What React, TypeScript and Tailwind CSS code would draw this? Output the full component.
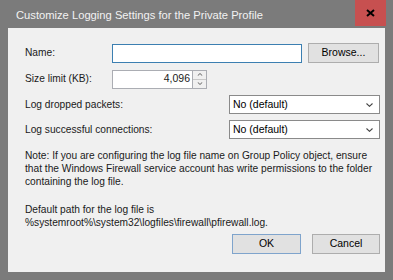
import React from "react";

const font = { fontFamily: '"Liberation Sans", Arial, sans-serif' };

const Chevron = ({ up = false, size = 7 }: { up?: boolean; size?: number }) => (
  <svg width={size} height={size - 3} viewBox="0 0 7 4" className={up ? "rotate-180" : ""}>
    <path d="M0.5 0.5 L3.5 3.3 L6.5 0.5" fill="none" stroke="#444" strokeWidth="1.1" />
  </svg>
);

const Select = ({ value }: { value: string }) => (
  <div className="flex h-[19px] w-[151px] items-center justify-between border border-[#8a8a8a] bg-white pl-[3px] pr-[6px]">
    <span className="text-[10.5px] text-black">{value}</span>
    <Chevron />
  </div>
);

const Button = ({ label, primary = false, width }: { label: string; primary?: boolean; width: string }) => (
  <button
    className={`${width} flex h-[20px] items-center justify-center border bg-[#e1e1e1] text-[10.5px] text-black ${
      primary ? "border-[#7fa4cc]" : "border-[#adadad]"
    }`}
  >
    {label}
  </button>
);

export default function App() {
  return (
    <div className="flex h-[280px] w-[393px] flex-col bg-[#7b7b7b]" style={font}>
      {/* title bar */}
      <div className="flex h-[28px] items-start justify-between">
        <span className="mt-[7px] pl-[16px] text-[11.2px] text-[#f2f2f2]">
          Customize Logging Settings for the Private Profile
        </span>
        <div className="mr-[7px] flex h-[26px] w-[31px] items-center justify-center bg-[#c75050]">
          <svg width="9" height="8" viewBox="0 0 9 8">
            <path d="M1 1 L8 7 M8 1 L1 7" stroke="#000" strokeWidth="2" />
          </svg>
        </div>
      </div>

      {/* client area */}
      <div className="mx-[8px] flex h-[244px] flex-col bg-[#f0f0f0] pl-[17px] text-[10.2px] text-[#1a1a1a]">
        <div className="mt-[15px] flex h-[20px] items-center">
          <span className="w-[87px]">Name:</span>
          <div className="h-[19px] w-[190px] border border-[#3c7fb1] bg-white" />
          <div className="ml-[6px]">
            <Button label="Browse..." width="w-[71px]" />
          </div>
        </div>

        <div className="mt-[7px] flex h-[18px] items-center">
          <span className="w-[87px]">Size limit (KB):</span>
          <div className="flex h-[19px] w-[81px] items-center justify-end border border-[#abadb3] bg-white pr-[2px] text-[10.5px]">
            4,096
          </div>
          <div className="flex h-[19px] w-[14px] flex-col border-y border-r border-[#abadb3] bg-[#f0f0f0]">
            <div className="flex flex-1 items-center justify-center border-b border-[#c8c8c8]">
              <Chevron up size={6} />
            </div>
            <div className="flex flex-1 items-center justify-center">
              <Chevron size={6} />
            </div>
          </div>
        </div>

        <div className="mt-[7px] flex h-[19px] items-center">
          <span className="w-[204px]">Log dropped packets:</span>
          <Select value="No (default)" />
        </div>

        <div className="mt-[6px] flex h-[19px] items-center">
          <span className="w-[204px]">Log successful connections:</span>
          <Select value="No (default)" />
        </div>

        <p className="mt-[10px] whitespace-nowrap leading-[13px]">
          Note: If you are configuring the log file name on Group Policy object, ensure
          <br />
          that the Windows Firewall service account has write permissions to the folder
          <br />
          containing the log file.
        </p>

        <p className="mt-[15px] leading-[13px]">
          Default path for the log file is
          <br />
          %systemroot%\system32\logfiles\firewall\pfirewall.log.
        </p>

        <div className="mt-[5px] flex justify-end gap-[11px] pr-[5px]">
          <Button label="OK" primary width="w-[69px]" />
          <Button label="Cancel" width="w-[68px]" />
        </div>
      </div>
    </div>
  );
}
